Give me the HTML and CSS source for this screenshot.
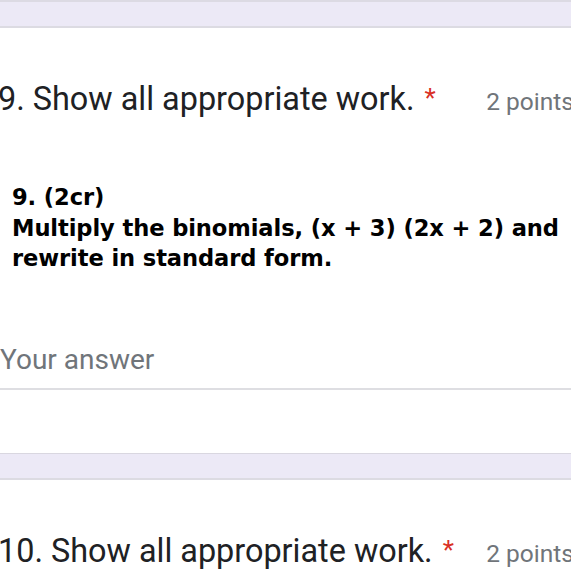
FILE: index.html
```html
<!DOCTYPE html>
<html>
<head>
<meta charset="utf-8">
<link rel="stylesheet" href="styles.css">
</head>
<body>
<div class="gap gap-top"></div>
<section class="card card-first">
  <div class="q-head">
    <span class="q-title">9. Show all appropriate work. <span class="req">*</span></span>
    <span class="points">2 points</span>
  </div>
  <div class="q-image">
    <p class="q-num">9. (2cr)</p>
    <p>Multiply the binomials, (x + 3) (2x + 2) and rewrite in standard form.</p>
  </div>
  <div class="answer">Your answer</div>
</section>
<div class="gap"></div>
<section class="card">
  <div class="q-head q-head2">
    <span class="q-title">10. Show all appropriate work. <span class="req">*</span></span>
    <span class="points">2 points</span>
  </div>
</section>
</body>
</html>
```
FILE: styles.css
```css
html, body {
  margin: 0;
  padding: 0;
  background: #fff;
  width: 571px;
  height: 571px;
  overflow: hidden;
}
body {
  font-family: Roboto, "Liberation Sans", sans-serif;
}
.gap {
  height: 24px;
  background: #ece9f6;
  border-top: 1px solid #d9d7e0;
  border-bottom: 2px solid #dcdbe2;
}
.gap-top {
  height: 24px;
  border-top: 2px solid #dcdae3;
}
.card {
  background: #fff;
}
.card-first {
  height: 425px;
}
.q-head {
  display: flex;
  align-items: baseline;
  padding-top: 52px;
  white-space: nowrap;
}
.q-title {
  font-size: 32.4px;
  color: #202124;
  margin-left: -2px;
  flex: 0 0 auto;
}
.req {
  color: #d93025;
  font-size: 26px;
  position: relative;
  top: -3px;
  margin-left: 2px;
}
.points {
  font-size: 24.5px;
  color: #70757a;
  margin-left: auto;
  margin-right: -3px;
}
.q-image {
  padding: 64px 0 0 12px;
  font-family: "DejaVu Sans", Verdana, sans-serif;
  font-weight: bold;
  font-size: 22.6px;
  line-height: 30px;
  color: #000;
  width: 559px;
  letter-spacing: -0.1px;
}
.q-image p {
  margin: 0;
}
.q-image .q-num {
  margin-bottom: 1px;
}
.answer {
  margin-top: 70px;
  font-size: 28px;
  color: #70757a;
  padding-bottom: 23px;
  border-bottom: 2px solid #dedee2;
  height: 22px;
}
.card:last-child .q-head {
  padding-top: 52px;
}
```
